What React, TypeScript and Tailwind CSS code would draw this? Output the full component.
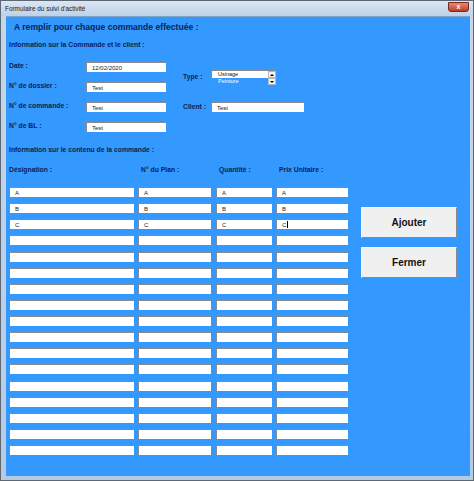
import React from 'react';

const navy = 'text-[#0a1f55]';

const columns = [
  { label: 'Désignation :', w: 'w-[125px]', ml: 'ml-[3px]', pad: '' },
  { label: 'N° du Plan :', w: 'w-[73px]', ml: 'ml-[4px]', pad: 'pl-[3px]' },
  { label: 'Quantité :', w: 'w-[56px]', ml: 'ml-[5px]', pad: 'pl-[3px]' },
  { label: 'Prix Unitaire :', w: 'w-[72px]', ml: 'ml-[4px]', pad: 'pl-[3px]' },
];

const prefilled = ['A', 'B', 'C'];

function Field({ value, className = '', cursor = false }: { value?: string; className?: string; cursor?: boolean }) {
  return (
    <div
      className={`h-[10px] bg-white border-t border-l border-[#8a8a8a] border-r-[#e4e4e4] border-b-[#e4e4e4] flex items-center pl-[5px] text-[6px] leading-none text-[#222] ${className}`}
    >
      {value}
      {cursor && <span className="ml-[1px] w-[1px] h-[7px] bg-black" />}
    </div>
  );
}

function Label({ children, className = '' }: { children: React.ReactNode; className?: string }) {
  return <div className={`font-bold text-[6.8px] leading-none ${navy} ${className}`}>{children}</div>;
}

function TopForm() {
  const left = [
    { label: 'Date :', value: '12/02/2020' },
    { label: 'N° de dossier :', value: 'Test' },
    { label: 'N° de commande :', value: 'Test' },
    { label: 'N° de BL :', value: 'Test' },
  ];
  return (
    <div className="flex mt-[9px]">
      <div className="flex flex-col gap-[10px] pl-[3px]">
        {left.map((r) => (
          <div key={r.label} className="flex items-center h-[10px]">
            <Label className="w-[77px] -mt-[1px]">{r.label}</Label>
            <Field value={r.value} className="w-[80px]" />
          </div>
        ))}
      </div>
      <div className="flex flex-col ml-[17px]">
        <div className="flex items-center h-[30px]">
          <Label className="w-[28px] mt-[1px]">Type :</Label>
          <div className="w-[65px] h-[15px] bg-white border-t border-l border-[#8a8a8a] border-r-[#e4e4e4] border-b-[#e4e4e4] flex mt-[1px]">
            <div className="flex-1 flex flex-col text-[5.5px] leading-none">
              <div className="h-[7px] flex items-center pl-[6px] text-[#111]">Usinage</div>
              <div className="h-[7px] flex items-center pl-[6px] bg-[#3399ff] text-white">Peinture</div>
            </div>
            <div className="w-[8px] flex flex-col bg-[#eaeaea]">
              <div className="h-[7px] flex items-center justify-center border border-[#b8b8b8] bg-[#f2f2f2]">
                <span className="w-0 h-0 border-l-[2px] border-r-[2px] border-b-[2px] border-l-transparent border-r-transparent border-b-black" />
              </div>
              <div className="h-[7px] flex items-center justify-center border border-[#b8b8b8] bg-[#f2f2f2]">
                <span className="w-0 h-0 border-l-[2px] border-r-[2px] border-t-[2px] border-l-transparent border-r-transparent border-t-black" />
              </div>
            </div>
          </div>
        </div>
        <div className="flex items-center h-[10px] mt-[10px]">
          <Label className="w-[28px]">Client :</Label>
          <Field value="Test" className="w-[93px]" />
        </div>
      </div>
    </div>
  );
}

function Grid() {
  return (
    <div className="flex">
      {columns.map((c, ci) => (
        <div key={c.label} className={`flex flex-col justify-between h-[268px] ${c.w} ${c.ml}`}>
          {Array.from({ length: 17 }).map((_, ri) => (
            <Field
              key={ri}
              value={prefilled[ri]}
              cursor={ci === 3 && ri === 2}
              className="w-full"
            />
          ))}
        </div>
      ))}
      <div className="flex flex-col ml-[13px] mt-[20px] gap-[9px]">
        <button className="w-[96px] h-[31px] bg-[#f0f0f0] border border-t-white border-l-white border-r-[#8a8a8a] border-b-[#8a8a8a] font-bold text-[10px] text-[#111]">
          Ajouter
        </button>
        <button className="w-[96px] h-[31px] bg-[#f0f0f0] border border-t-white border-l-white border-r-[#8a8a8a] border-b-[#8a8a8a] font-bold text-[10px] text-[#111]">
          Fermer
        </button>
      </div>
    </div>
  );
}

export default function App() {
  return (
    <div
      className="w-[474px] h-[481px] flex flex-col bg-gradient-to-b from-[#c7d7ea] to-[#b6cbe2] border border-[#5d6877]"
      style={{ fontFamily: '"Liberation Sans", Arial, sans-serif' }}
    >
      <div className="h-[15px] flex items-center justify-between pl-[4px] pr-[4px] bg-gradient-to-b from-[#dce7f4] to-[#bed1e8]">
        <span className="text-[6.4px] text-[#1a1a1a]">Formulaire du suivi d'activité</span>
        <div className="w-[21px] h-[10px] -mt-[4px] rounded-b-[3px] bg-gradient-to-b from-[#e08a78] to-[#c13b22] border border-[#7a2a1c] flex items-center justify-center text-white font-bold text-[7px] leading-none">
          x
        </div>
      </div>
      <div className="flex-1 ml-[5px] mr-[3px] mb-[4px] bg-[#3399ff] border-t border-[#7fa3c8] flex flex-col">
        <div className={`h-[20px] flex items-center pl-[8px] font-bold text-[8.6px] ${navy}`}>
          A remplir pour chaque commande effectuée :
        </div>
        <div className="h-[16px] flex items-center pl-[3px]">
          <Label>Information sur la Commande et le client :</Label>
        </div>
        <TopForm />
        <div className="h-[16px] flex items-center pl-[3px] mt-[10px]">
          <Label>Information sur le contenu de la commande :</Label>
        </div>
        <div className="flex h-[16px] items-center mt-[4px]">
          {columns.map((c) => (
            <div key={c.label} className={`${c.w} ${c.ml} ${c.pad}`}>
              <Label>{c.label}</Label>
            </div>
          ))}
        </div>
        <div className="mt-[9px]">
          <Grid />
        </div>
      </div>
    </div>
  );
}
